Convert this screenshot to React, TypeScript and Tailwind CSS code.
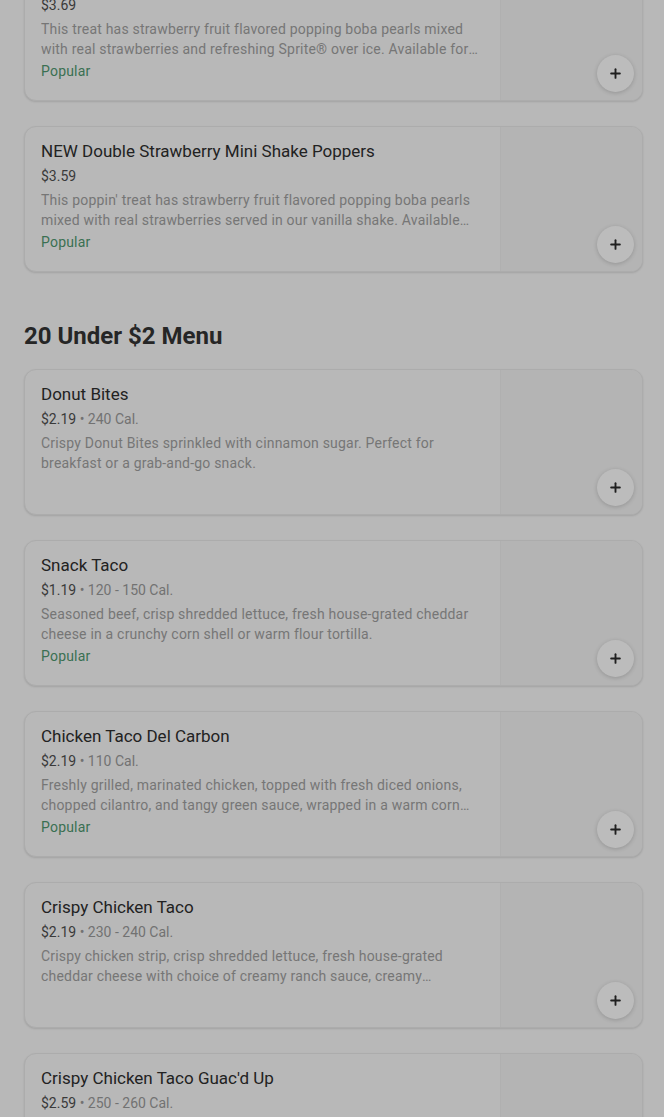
import { Plus } from 'lucide-react';

interface Item {
  title: string;
  price: string;
  cal?: string;
  desc: string;
  popular?: boolean;
}

const topItems: Item[] = [
  {
    title: 'NEW Strawberry Sprite Poppers',
    price: '$3.69',
    desc: 'This treat has strawberry fruit flavored popping boba pearls mixed with real strawberries and refreshing Sprite® over ice. Available for a limited time.',
    popular: true,
  },
  {
    title: 'NEW Double Strawberry Mini Shake Poppers',
    price: '$3.59',
    desc: "This poppin' treat has strawberry fruit flavored popping boba pearls mixed with real strawberries served in our vanilla shake. Available for a limited time.",
    popular: true,
  },
];

const underTwo: Item[] = [
  {
    title: 'Donut Bites',
    price: '$2.19',
    cal: '240 Cal.',
    desc: 'Crispy Donut Bites sprinkled with cinnamon sugar. Perfect for breakfast or a grab-and-go snack.',
  },
  {
    title: 'Snack Taco',
    price: '$1.19',
    cal: '120 - 150 Cal.',
    desc: 'Seasoned beef, crisp shredded lettuce, fresh house-grated cheddar cheese in a crunchy corn shell or warm flour tortilla.',
    popular: true,
  },
  {
    title: 'Chicken Taco Del Carbon',
    price: '$2.19',
    cal: '110 Cal.',
    desc: 'Freshly grilled, marinated chicken, topped with fresh diced onions, chopped cilantro, and tangy green sauce, wrapped in a warm corn tortilla.',
    popular: true,
  },
  {
    title: 'Crispy Chicken Taco',
    price: '$2.19',
    cal: '230 - 240 Cal.',
    desc: 'Crispy chicken strip, crisp shredded lettuce, fresh house-grated cheddar cheese with choice of creamy ranch sauce, creamy jalapeño sauce or salsa.',
  },
  {
    title: "Crispy Chicken Taco Guac'd Up",
    price: '$2.59',
    cal: '250 - 260 Cal.',
    desc: 'Crispy chicken strip, crisp shredded lettuce, fresh house-grated cheddar cheese and guacamole with choice of sauce.',
  },
];

function MenuCard({ item }: { item: Item }) {
  return (
    <div className="flex h-[146px] shrink-0 overflow-hidden rounded-xl border border-[#acacac] bg-[#b8b8b8] shadow-[0_1px_2px_rgba(0,0,0,0.12)]">
      {/* text side */}
      <div className="min-w-0 flex-1 pl-4 pr-[22px] pt-[13px]">
        <div className="truncate text-[17px] font-normal leading-[22px] text-[#222]">
          {item.title}
        </div>
        <div className="mt-[4px] text-[14px] leading-[20px] text-[#3a3a3a]">
          {item.price}
          {item.cal && <span className="text-[#727272]"> • {item.cal}</span>}
        </div>
        <p className="mt-[4px] line-clamp-2 text-[14px] leading-[20px] tracking-[0.2px] text-[#767676]">
          {item.desc}
        </p>
        {item.popular && (
          <div className="mt-[2px] text-[14px] font-normal leading-[20px] tracking-[0.2px] text-[#3a7052]">
            Popular
          </div>
        )}
      </div>
      {/* picture side */}
      <div className="relative w-[142px] shrink-0 border-l border-[#b0b0b0] bg-[#b4b4b4]">
        <button className="absolute bottom-[8px] right-[8px] flex h-[37px] w-[37px] items-center justify-center rounded-full bg-[#bcbcbc] shadow-[0_1px_4px_rgba(0,0,0,0.18)]">
          <Plus size={15} strokeWidth={3} className="text-[#1f1f1f]" />
        </button>
      </div>
    </div>
  );
}

export default function App() {
  return (
    <div
      className="h-[1117px] overflow-hidden bg-[#b8b8b8]"
      style={{ fontFamily: 'Roboto, "Liberation Sans", sans-serif' }}>
      <div className="-mt-[45px] pl-6 pr-[21px]">
        <div className="flex flex-col gap-[25px]">
          {topItems.map((item, idx) => (
            <MenuCard key={idx} item={item} />
          ))}
        </div>

        <h2 className="mb-[17px] mt-[48px] text-[24px] font-bold leading-[32px] text-[#262626]">
          20 Under $2 Menu
        </h2>

        <div className="flex flex-col gap-[25px]">
          {underTwo.map((item, idx) => (
            <MenuCard key={idx} item={item} />
          ))}
        </div>
      </div>
    </div>
  );
}
